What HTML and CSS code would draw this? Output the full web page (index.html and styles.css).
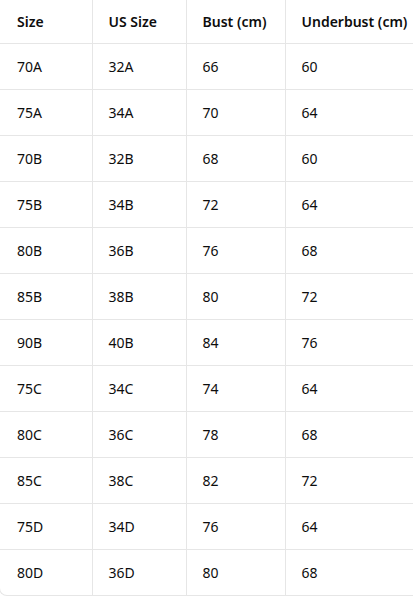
FILE: index.html
```html
<!DOCTYPE html>
<html>
<head>
<meta charset="utf-8">
<link rel="stylesheet" href="styles.css">
</head>
<body>
<div class="wrap">
<table class="sizes">
<colgroup>
<col class="c1"><col class="c2"><col class="c3"><col class="c4">
</colgroup>
<thead>
<tr><th>Size</th><th>US Size</th><th>Bust (cm)</th><th>Underbust (cm)</th></tr>
</thead>
<tbody>
<tr><td>70A</td><td>32A</td><td>66</td><td>60</td></tr>
<tr><td>75A</td><td>34A</td><td>70</td><td>64</td></tr>
<tr><td>70B</td><td>32B</td><td>68</td><td>60</td></tr>
<tr><td>75B</td><td>34B</td><td>72</td><td>64</td></tr>
<tr><td>80B</td><td>36B</td><td>76</td><td>68</td></tr>
<tr><td>85B</td><td>38B</td><td>80</td><td>72</td></tr>
<tr><td>90B</td><td>40B</td><td>84</td><td>76</td></tr>
<tr><td>75C</td><td>34C</td><td>74</td><td>64</td></tr>
<tr><td>80C</td><td>36C</td><td>78</td><td>68</td></tr>
<tr><td>85C</td><td>38C</td><td>82</td><td>72</td></tr>
<tr><td>75D</td><td>34D</td><td>76</td><td>64</td></tr>
<tr><td>80D</td><td>36D</td><td>80</td><td>68</td></tr>
</tbody>
</table>
</div>
</body>
</html>
```
FILE: styles.css
```css
html, body {
  margin: 0;
  padding: 0;
  background: #ffffff;
}
body {
  font-family: "Noto Sans", "Open Sans", sans-serif;
  font-size: 14px;
  color: #0d0d0d;
  overflow: hidden;
}
.wrap {
  width: 414px;
  margin-left: -1px;
  box-sizing: border-box;
  border-left: 1px solid #e6e6e6;
  border-bottom: 1px solid #e6e6e6;
  border-radius: 0 0 0 8px;
  overflow: hidden;
}
.sizes {
  border-collapse: collapse;
  table-layout: fixed;
  width: 440px;
  margin-left: -1px;
}
.c1 { width: 93px; }
.c2 { width: 94px; }
.c3 { width: 99px; }
.c4 { width: 154px; }
.sizes th,
.sizes td {
  text-align: left;
  padding: 0 0 0 16px;
  border-right: 1px solid #e6e6e6;
  border-bottom: 1px solid #e6e6e6;
  white-space: nowrap;
}
.sizes th {
  height: 43px;
  font-weight: 600;
}
.sizes td {
  height: 45px;
  font-weight: 400;
}
.sizes th:first-child,
.sizes td:first-child {
  padding-left: 18px;
}
.sizes tbody tr:last-child td {
  border-bottom: none;
}
.sizes th:last-child,
.sizes td:last-child {
  border-right: none;
}
```
